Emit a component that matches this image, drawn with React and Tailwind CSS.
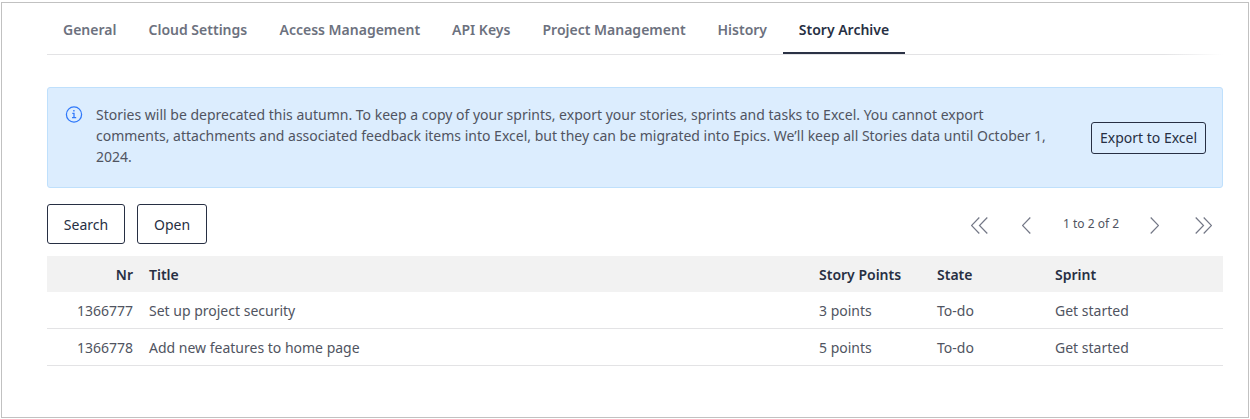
import React from "react";

const tabs = [
  ["General", "w-[85.5px]"],
  ["Cloud Settings", "w-[131px]"],
  ["Access Management", "w-[172.5px]"],
  ["API Keys", "w-[90.5px]"],
  ["Project Management", "w-[175px]"],
  ["History", "w-[65.5px]"],
];

const rows = [
  ["1366777", "Set up project security", "3 points"],
  ["1366778", "Add new features to home page", "5 points"],
];

function Chevron({ double = false, right = false }) {
  return (
    <svg
      width={double ? 17 : 9}
      height="17"
      viewBox={double ? "0 0 17 17" : "0 0 9 17"}
      fill="none"
      stroke="#747887"
      strokeWidth="1.2"
      className={`block shrink-0 ${right ? "rotate-180" : ""}`}
    >
      <path d="M8.3.5.5 8.5l7.8 8" />
      {double && <path d="m16.3.5-7.8 8 7.8 8" />}
    </svg>
  );
}

export default function App() {
  return (
    <div className="h-[419px] w-[1250px] bg-white pt-[2px] pl-px font-['Noto_Sans',sans-serif] text-sm text-[#505461]">
      <div className="h-[416px] w-[1248px] border border-[#c1c1c1] pt-[3px] pr-[25px] pl-[45px]">
        <nav className="h-[49px] bg-[linear-gradient(to_right,#e3e3e5_95%,transparent)] bg-[length:100%_1px] bg-bottom bg-no-repeat pl-4 font-semibold text-[#6c717e]">
          <div className="flex">
            {tabs.map(([label, width]) => (
              <div key={label} className={`${width} shrink-0 pt-[14px] leading-5 whitespace-nowrap`}>{label}</div>
            ))}
            <div className="h-[48px] w-[122px] border-b-2 border-[#2b3245] pt-[14px] text-center leading-5 whitespace-nowrap text-[#272f43]">
              Story Archive
            </div>
          </div>
        </nav>

        <section className="mt-8 flex h-[101px] rounded-[3px] border border-[#bfe0fc] bg-[#dcedfe]">
          <svg className="mt-[18px] ml-[17px] shrink-0" width="18" height="17" viewBox="0 0 18 17" fill="none" stroke="#2f78fa" strokeWidth="1.25">
            <circle cx="9" cy="8.5" r="7.6" />
            <path d="M7.3 7.4H9v4M7 11.5h4.2" />
            <path d="M8.2 4.8h1.4" strokeWidth="1.4" />
          </svg>
          <p className="mt-4 ml-[13px] w-[995px] shrink-0 leading-[21px] whitespace-nowrap">
            Stories will be deprecated this autumn. To keep a copy of your sprints, export your stories, sprints and tasks to Excel. You cannot export<br />
            comments, attachments and associated feedback items into Excel, but they can be migrated into Epics. We’ll keep all Stories data until October 1,<br />
            2024.
          </p>
          <button className="mt-[34px] h-8 w-[115px] shrink-0 rounded-[3px] border border-[#272f43] whitespace-nowrap text-[#272f43]">Export to Excel</button>
        </section>

        <div className="mt-4 flex h-10 items-center gap-3 text-[#272f43]">
          <button className="h-10 w-[78px] rounded-[3px] border border-[#272f43] bg-white pt-0.5">Search</button>
          <button className="h-10 w-[70px] rounded-[3px] border border-[#272f43] bg-white pt-0.5">Open</button>
          <div className="mr-[11.5px] ml-auto flex items-center pt-[3px] text-xs text-[#505461]">
            <Chevron double />
            <span className="ml-[34px]"><Chevron /></span>
            <span className="-mt-[3px] mr-[30.5px] ml-[32.5px] w-[56px] text-center whitespace-nowrap">1 to 2 of 2</span>
            <Chevron right />
            <span className="ml-9"><Chevron double right /></span>
          </div>
        </div>

        <table className="mt-3 w-full table-fixed border-separate border-spacing-0 text-left">
          <colgroup>
            <col className="w-[94px]" /><col className="w-[670px]" /><col className="w-[118px]" /><col className="w-[118px]" /><col />
          </colgroup>
          <thead className="bg-[#f2f2f2] text-[#272f43]">
            <tr className="h-9">
              <th className="p-0 pt-0.5 pr-2 text-right font-semibold">Nr</th>
              <th className="p-0 pt-0.5 pl-2 font-semibold">Title</th>
              <th className="p-0 pt-0.5 pl-2 font-semibold">Story Points</th>
              <th className="p-0 pt-0.5 pl-2 font-semibold">State</th>
              <th className="p-0 pt-0.5 pl-2 font-semibold">Sprint</th>
            </tr>
          </thead>
          <tbody>
            {rows.map(([nr, title, points]) => (
              <tr key={nr} className="h-[37px] *:border-b *:border-[#e3e3e5] *:pt-0.5">
                <td className="pr-2 text-right">{nr}</td>
                <td className="pl-2">{title}</td>
                <td className="pl-2">{points}</td>
                <td className="pl-2">To-do</td>
                <td className="pl-2">Get started</td>
              </tr>
            ))}
          </tbody>
        </table>
      </div>
    </div>
  );
}
